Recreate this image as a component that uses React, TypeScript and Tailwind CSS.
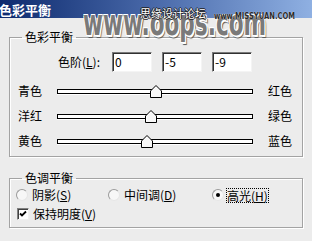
const font = { fontFamily: '"Noto Sans CJK SC", "Liberation Sans", sans-serif' };

function Thumb({ offset }: { offset: number }) {
  return (
    <svg
      width="12"
      height="13"
      viewBox="0 0 12 13"
      className="absolute top-[-5px]"
      style={{ left: offset - 6 }}
    >
      <path d="M6 0.5 L11.5 6 L11.5 12.5 L0.5 12.5 L0.5 6 Z" fill="#f8f8f8" stroke="#000" />
      <path d="M1.5 6.5 L6 2 M1.5 6.5 L1.5 11.5" stroke="#fff" fill="none" />
    </svg>
  );
}

function SliderRow({ left, right, value }: { left: string; right: string; value: number }) {
  return (
    <div className="flex h-[14px] items-center pl-[8px]">
      <span className="w-[39px] text-[12px] leading-[14px]">{left}</span>
      <div className="relative h-[5px] w-[196px] border border-black bg-white shadow-[0_1px_0_#fff]">
        <Thumb offset={98 + value * 0.98} />
      </div>
      <span className="ml-[15px] text-[12px] leading-[14px]">{right}</span>
    </div>
  );
}

function LevelInput({ value }: { value: string }) {
  return (
    <div className="flex h-[20px] w-[40px] items-center border border-[#7a7a7a] border-r-[#f4f4f4] border-b-[#f4f4f4] bg-white pl-[2px] text-[12px] shadow-[inset_1px_1px_0_#303030]">
      {value}
    </div>
  );
}

function Radio({ checked }: { checked?: boolean }) {
  return (
    <span className="flex h-[12px] w-[12px] items-center justify-center rounded-full border border-[#9a9a9a] border-r-[#e6e6e6] border-b-[#e6e6e6] bg-[#f7f7f7]">
      {checked && <span className="h-[4px] w-[4px] rounded-full bg-black" />}
    </span>
  );
}

export default function App() {
  return (
    <div className="relative h-[241px] w-[312px] overflow-hidden bg-[#ececec] text-black" style={font}>
      <div className="flex h-[18px] items-center bg-gradient-to-r from-[#0e2a6e] via-[#4a6aaa] to-[#8fb0e2]">
        <span className="-ml-[1px] text-[13px] font-bold leading-none text-white">色彩平衡</span>
      </div>

      <div className="px-[9px]">
        <fieldset className="mt-[12px] border border-[#a3a3a3] pb-[8px] shadow-[1px_1px_0_#fff,inset_1px_1px_0_#fff]">
          <legend className="ml-[12px] px-[3px] text-[12px] leading-[14px]">色彩平衡</legend>
          <div className="flex items-center pt-[8px] pl-[48px]">
            <span className="w-[54px] text-[12px]">
              色阶(<span className="underline">L</span>):
            </span>
            <div className="flex gap-[10px]">
              <LevelInput value="0" />
              <LevelInput value="-5" />
              <LevelInput value="-9" />
            </div>
          </div>
          <div className="mt-[12px] flex flex-col gap-[11px]">
            <SliderRow left="青色" right="红色" value={0} />
            <SliderRow left="洋红" right="绿色" value={-5} />
            <SliderRow left="黄色" right="蓝色" value={-9} />
          </div>
        </fieldset>

        <fieldset className="mt-[14px] border border-[#a3a3a3] pb-[6px] shadow-[1px_1px_0_#fff,inset_1px_1px_0_#fff]">
          <legend className="ml-[12px] px-[3px] text-[12px] leading-[14px]">色调平衡</legend>
          <div className="mt-[3px] flex h-[14px] items-center pl-[6px] text-[12px]">
            <div className="flex w-[92px] items-center gap-[4px]">
              <Radio />
              <span>
                阴影(<span className="underline">S</span>)
              </span>
            </div>
            <div className="flex w-[104px] items-center gap-[4px]">
              <Radio />
              <span>
                中间调(<span className="underline">D</span>)
              </span>
            </div>
            <div className="flex items-center gap-[3px]">
              <Radio checked />
              <span className="leading-[13px] outline outline-1 outline-dotted outline-black">
                高光(<span className="underline">H</span>)
              </span>
            </div>
          </div>
          <div className="mt-[5px] flex h-[14px] items-center gap-[4px] pl-[7px] text-[12px]">
            <span className="flex h-[12px] w-[12px] items-center justify-center border border-[#808080] border-r-[#f0f0f0] border-b-[#f0f0f0] bg-white shadow-[inset_1px_1px_0_#404040]">
              <svg width="8" height="8" viewBox="0 0 8 8">
                <path d="M1 3.5 L3 5.5 L7 1.5" stroke="#000" strokeWidth="1.8" fill="none" />
              </svg>
            </span>
            <span>
              保持明度(<span className="underline">V</span>)
            </span>
          </div>
        </fieldset>
      </div>

      <span
        className="pointer-events-none absolute left-[83px] top-[5px] origin-left scale-x-[0.6] whitespace-nowrap text-[36px] font-bold leading-[36px] text-[#7a7a7a] [text-shadow:-1px_-1px_0_#fff,1px_-1px_0_#fff,-1px_1px_0_#fff,1px_1px_0_#fff,2px_2px_0_#fff,3px_3px_1px_#555]"
        style={{ fontFamily: '"DejaVu Sans", sans-serif' }}
      >
        www.oops.com
      </span>
      <span className="pointer-events-none absolute left-[140px] top-[7px] text-[11px] leading-[12px] text-white [text-shadow:-1px_0_0_#222,1px_0_0_#222,0_1px_0_#222,0_-1px_0_#222]">
        思缘设计论坛
      </span>
      <span
        className="pointer-events-none absolute left-[214px] top-[11px] origin-left scale-x-[0.8] whitespace-nowrap text-[8.5px] font-bold leading-[10px] text-[#2a2a2a] [text-shadow:0_0_1px_#fff]"
        style={{ fontFamily: '"DejaVu Sans", sans-serif' }}
      >
        www.MISSYUAN.COM
      </span>
    </div>
  );
}
